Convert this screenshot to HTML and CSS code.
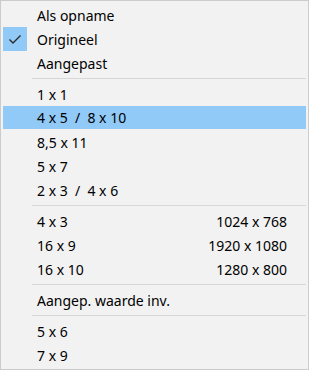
FILE: index.html
```
<!DOCTYPE html>
<html>
<head>
<meta charset="utf-8">
<link rel="stylesheet" href="styles.css">
</head>
<body>
<div class="menu">
  <div class="item"><span class="label">Als opname</span></div>
  <div class="item checked"><span class="check"><svg width="24" height="24" viewBox="0 0 24 24"><polyline points="6.5,12.5 10,16 17.5,8.5" fill="none" stroke="#2b2b2b" stroke-width="1.4"/></svg></span><span class="label">Origineel</span></div>
  <div class="item"><span class="label">Aangepast</span></div>
  <div class="sep"></div>
  <div class="item"><span class="label">1 x 1</span></div>
  <div class="item active"><span class="label">4 x 5  /  8 x 10</span></div>
  <div class="item"><span class="label">8,5 x 11</span></div>
  <div class="item"><span class="label">5 x 7</span></div>
  <div class="item"><span class="label">2 x 3  /  4 x 6</span></div>
  <div class="sep"></div>
  <div class="item"><span class="label">4 x 3</span><span class="right">1024 x 768</span></div>
  <div class="item"><span class="label">16 x 9</span><span class="right">1920 x 1080</span></div>
  <div class="item"><span class="label">16 x 10</span><span class="right">1280 x 800</span></div>
  <div class="sep"></div>
  <div class="item"><span class="label">Aangep. waarde inv.</span></div>
  <div class="sep"></div>
  <div class="item"><span class="label">5 x 6</span></div>
  <div class="item"><span class="label">7 x 9</span></div>
</div>
</body>
</html>
```
FILE: styles.css
```
html, body {
  margin: 0;
  padding: 0;
  background: #f2f2f2;
}
.menu {
  box-sizing: border-box;
  width: 309px;
  height: 370px;
  border: 1px solid #cccccc;
  background: #f2f2f2;
  padding: 2px;
  display: flex;
  flex-direction: column;
  font-family: "Noto Sans", "Open Sans", sans-serif;
  font-size: 14px;
  color: #000;
}
.item {
  position: relative;
  height: 24px;
  display: flex;
  align-items: center;
  padding-left: 34px;
  padding-right: 19px;
  white-space: pre;
}
.item.active {
  background: #91c9f7;
  height: 23px;
  margin-bottom: 1px;
}
.label {
  flex: 1;
}
.right {
  text-align: right;
}
.check {
  position: absolute;
  left: 0;
  top: 0;
  width: 24px;
  height: 24px;
  background: #91c9f7;
}
.check svg {
  display: block;
}
.sep {
  height: 1px;
  margin: 3px 0 3px 29px;
  background: #d7d7d7;
}
```
